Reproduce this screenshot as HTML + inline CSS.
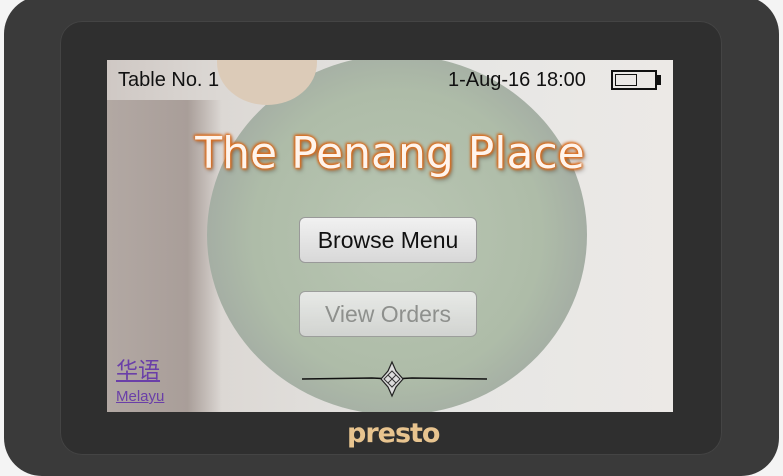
<!DOCTYPE html>
<html><head><meta charset="utf-8"><style>
body{margin:0;width:783px;height:474px;background:#f4f4f4;position:relative;overflow:hidden;font-family:"Liberation Sans",sans-serif}
.dev{position:absolute;left:4px;top:-4px;width:775px;height:480px;border-radius:38px;background:#3a3a3a}
.bez{position:absolute;left:60px;top:21px;width:662px;height:434px;border-radius:22px;background:#2f2f2f;box-shadow:inset 0 0 0 1px #444}
.scr{position:absolute;left:107px;top:60px;width:566px;height:352px;overflow:hidden;
background:linear-gradient(90deg,#cfc8c4 0%,#dcd8d4 20%,#e6e6e4 60%,#ece9e6 100%)}
.bowl{position:absolute;left:100px;top:-5px;width:380px;height:360px;border-radius:50%;background:radial-gradient(circle,#b9c6b3 0%,#aebca8 55%,#a2aaa3 78%,#8f9696 84%,#c4c6c4 88%,rgba(220,220,218,0) 91%)}
.left{position:absolute;left:0;top:40px;width:115px;height:312px;background:linear-gradient(90deg,#b2a8a3,#a99e99 70%,rgba(200,195,192,0))}
.sauce{position:absolute;left:110px;top:-40px;width:100px;height:85px;border-radius:50%;background:#dccbb8}
.t{position:absolute;font-size:20px;color:#111}
.title{position:absolute;left:0;width:566px;top:68px;text-align:center;font-family:"DejaVu Sans",sans-serif;font-size:44px;color:#fff4ec;
text-shadow:0 0 2px #e07020,0 0 3px #e07020,1px 1px 3px #d06010,-1px -1px 3px #d06010,2px 3px 5px rgba(0,0,0,.35)}
.btn{position:absolute;left:192px;width:176px;height:44px;border:1px solid #999;border-radius:6px;background:linear-gradient(#f1f1f1,#d8d8d8);text-align:center;line-height:44px;font-size:23px}
a{position:absolute;color:#6a3fa8;text-decoration:underline}
</style></head><body>
<div class="dev"></div>
<div class="bez"></div>
<div class="scr">
<div class="left"></div><div class="bowl"></div><div class="sauce"></div>
<div class="t" style="left:11px;top:9px">Table No. 1</div>
<div class="t" style="left:341px;top:9px">1-Aug-16 18:00</div>
<div style="position:absolute;left:504px;top:10px;width:46px;height:20px;border:2px solid #111;box-sizing:border-box"></div>
<div style="position:absolute;left:550px;top:15px;width:4px;height:10px;background:#111"></div>
<div style="position:absolute;left:508px;top:14px;width:22px;height:12px;border:1.5px solid #111;box-sizing:border-box"></div>
<div class="title">The Penang Place</div>
<div class="btn" style="top:157px;color:#111">Browse Menu</div>
<div class="btn" style="top:231px;color:#888;opacity:.85">View Orders</div>
<a style="left:9px;top:296px;font-size:22px;font-family:'Noto Sans CJK SC',sans-serif;line-height:26px">华语</a>
<a style="left:9px;top:328px;font-size:15px">Melayu</a>
<svg style="position:absolute;left:195px;top:300px" width="185" height="40" viewBox="0 0 185 40">
<path d="M0 19 L70 18 L90 19 L110 18 L185 19" stroke="#111" stroke-width="1.5" fill="none"/>
<path d="M90 2 L94 11 L101 19 L94 27 L90 36 L86 27 L79 19 L86 11Z" fill="#ddd" stroke="#222" stroke-width="1.2"/>
<path d="M90 11 L98 19 L90 27 L82 19Z M86 15 L94 23 M94 15 L86 23" fill="none" stroke="#333" stroke-width="1"/>
</svg>
</div>
<div style="position:absolute;left:347px;top:418px;font-size:27px;font-weight:bold;color:#e8c48f;letter-spacing:-1px;font-family:'DejaVu Sans',sans-serif">presto</div>
</body></html>
